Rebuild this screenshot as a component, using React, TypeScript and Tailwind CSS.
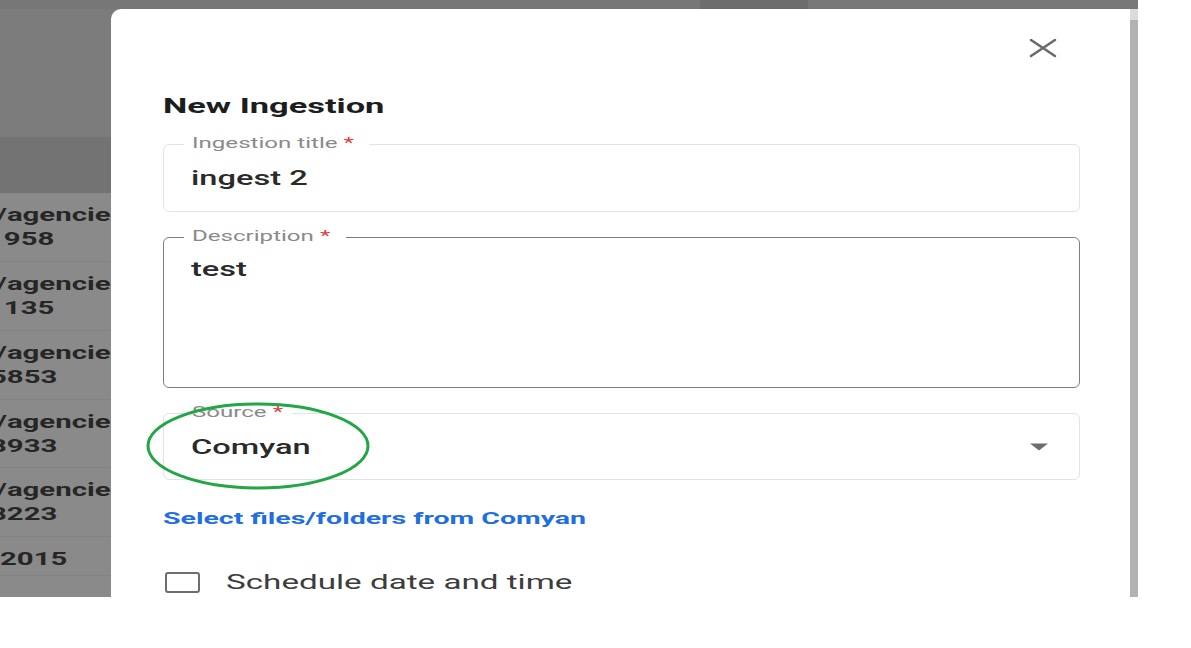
import React from "react";

const S = "inline-block origin-left scale-x-[1.63] whitespace-nowrap";

function Row({ a, b, aml, bml, h }: { a?: string; b: string; aml: string; bml: string; h: string }) {
  return (
    <div className={`${h} border-b border-[#838383] bg-[#8a8a8a] pt-[10px] text-[18px] leading-[24px] font-bold text-[#262626]`}>
      {a && (
        <div className={aml}>
          <span className={S}>{a}</span>
        </div>
      )}
      <div className={bml}>
        <span className={S}>{b}</span>
      </div>
    </div>
  );
}

function Field({
  label,
  lw,
  children,
  h,
  border,
  align,
}: {
  label: string;
  lw: string;
  children: React.ReactNode;
  h: string;
  border: string;
  align: string;
}) {
  return (
    <div className={`relative ${h} ${border} rounded-[6px] ${align} pl-[27px] pr-[30px]`}>
      <div className="absolute left-[20px] top-[-12px] h-[20px] bg-white px-[8px] text-[14px] leading-[20px] text-[#8a8a8a]">
        <span className={`inline-block ${lw}`}>
          <span className="inline-block origin-left scale-x-[1.72] whitespace-nowrap">
            {label} <span className="text-[#e53935]">*</span>
          </span>
        </span>
      </div>
      {children}
    </div>
  );
}

export default function App() {
  return (
    <div className="w-[1191px] h-[648px] bg-white overflow-hidden font-[Roboto,sans-serif]">
      <div className="relative w-[1138px] h-[597px] overflow-hidden bg-[#7b7b7b]">
        {/* background page */}
        <div className="flex flex-col h-full">
          <div className="h-[137px] flex flex-col bg-[#7c7c7c]">
            <div className="h-[9px] flex">
              <div className="w-[700px] bg-[#777777]" />
              <div className="w-[108px] bg-[#6d6d6d]" />
              <div className="flex-1 bg-[#787878]" />
            </div>
          </div>
          <div className="h-[56px] bg-[#737373]" />
          <Row a="/agencies" b="1958" aml="ml-[-4px]" bml="ml-[-13px]" h="h-[69px]" />
          <Row a="/agencies" b="1135" aml="ml-[-4px]" bml="ml-[-13px]" h="h-[69px]" />
          <Row a="/agencies" b="5853" aml="ml-[-4px]" bml="ml-[-10px]" h="h-[69px]" />
          <Row a="/agencies" b="3933" aml="ml-[-4px]" bml="ml-[-10px]" h="h-[68px]" />
          <Row a="/agencies" b="3223" aml="ml-[-4px]" bml="ml-[-10px]" h="h-[69px]" />
          <Row b="2015" aml="" bml="ml-[0px]" h="h-[39px]" />
          <div className="flex-1 bg-[#8a8a8a]" />
        </div>

        {/* modal */}
        <div className="absolute left-[111px] top-[9px] right-0 bottom-[-60px] flex rounded-tl-[10px] bg-white overflow-hidden">
          <div className="flex-1 flex flex-col pl-[52px] pr-[50px]">
            <div className="mt-[29px] h-[20px] flex justify-end pr-[22px]">
              <svg width="30" height="20" viewBox="0 0 30 20">
                <path d="M3 2 L27 18 M27 2 L3 18" stroke="#6b6b6b" strokeWidth="2.6" strokeLinecap="round" fill="none" />
              </svg>
            </div>
            <div className="mt-[36px] h-[24px] text-[20px] leading-[24px] font-bold text-[#1d1d1d]">
              <span className="inline-block origin-left scale-x-[1.72] whitespace-nowrap">New Ingestion</span>
            </div>

            <div className="mt-[26px]">
              <Field label="Ingestion title" lw="w-[169px]" h="h-[68px]" border="border border-[#e3e3e3]" align="flex items-center">
                <div className="text-[20px] leading-[24px] font-medium text-[#2a2a2a]">
                  <span className={S}>ingest 2</span>
                </div>
              </Field>
            </div>

            <div className="mt-[25px]">
              <Field label="Description" lw="w-[146px]" h="h-[151px]" border="border-[1.5px] border-[#7f7f7f]" align="pt-[19px]">
                <div className="text-[20px] leading-[24px] font-medium text-[#2a2a2a]">
                  <span className={S}>test</span>
                </div>
              </Field>
            </div>

            <div className="mt-[25px]">
              <Field label="Source" lw="w-[92px]" h="h-[67px]" border="border border-[#e3e3e3]" align="flex items-center justify-between">
                <div className="text-[20px] leading-[24px] font-medium text-[#2a2a2a]">
                  <span className={S}>Comyan</span>
                </div>
                <svg width="20" height="8" viewBox="0 0 20 8">
                  <path d="M1 0.5 L19 0.5 L10 7.5 Z" fill="#6d6d6d" />
                </svg>
              </Field>
            </div>

            <div className="mt-[29px] h-[20px] text-[16px] leading-[20px] font-bold text-[#1f6fe0]">
              <span className="inline-block origin-left scale-x-[1.78] whitespace-nowrap">Select files/folders from Comyan</span>
            </div>

            <div className="mt-[41px] flex items-center gap-[26px] pl-[2px]">
              <div className="w-[35px] h-[21px] rounded-[3px] border-2 border-[#6e6e6e]" />
              <div className="text-[20px] leading-[24px] text-[#3d3d3d]">
                <span className="inline-block origin-left scale-x-[1.66] whitespace-nowrap">Schedule date and time</span>
              </div>
            </div>
          </div>
          <div className="w-[8px] flex flex-col">
            <div className="h-[11px] bg-[#dcdcdc]" />
            <div className="flex-1 bg-[#b2b2b2]" />
          </div>
        </div>

        {/* green annotation ellipse */}
        <svg className="absolute left-[140px] top-[398px]" width="240" height="100" viewBox="0 0 240 100">
          <ellipse cx="118" cy="48" rx="110" ry="42" fill="none" stroke="#22a646" strokeWidth="3" />
        </svg>
      </div>
    </div>
  );
}
